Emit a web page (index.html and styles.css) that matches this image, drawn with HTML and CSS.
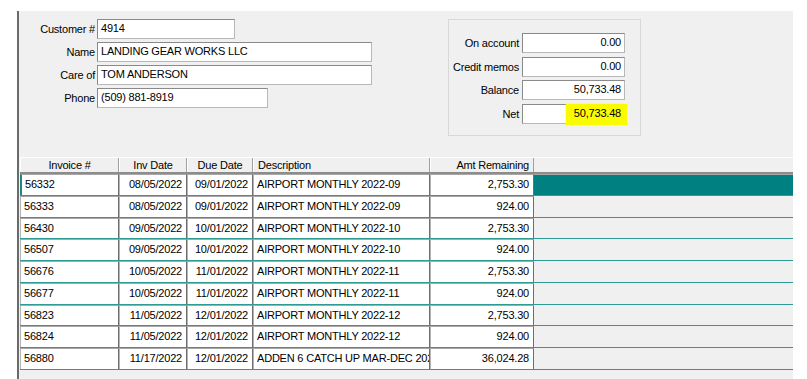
FILE: index.html
```html
<!DOCTYPE html>
<html lang="en">
<head>
    <meta charset="UTF-8">
    <meta name="viewport" content="width=device-width, initial-scale=1.0">
    <title>Customer Invoices</title>
    <link rel="stylesheet" href="styles.css">
</head>
<body>
    <div class="window">
        <div class="top">
            <!-- Customer fields -->
            <div class="customer">
                <div class="field">
                    <label>Customer #</label>
                    <div class="edit w-num">4914</div>
                </div>
                <div class="field">
                    <label>Name</label>
                    <div class="edit w-name">LANDING GEAR WORKS LLC</div>
                </div>
                <div class="field">
                    <label>Care of</label>
                    <div class="edit w-name">TOM ANDERSON</div>
                </div>
                <div class="field">
                    <label>Phone</label>
                    <div class="edit w-phone">(509) 881-8919</div>
                </div>
            </div>

            <!-- Totals -->
            <div class="totals">
                <label>On account</label>
                <div class="edit num">0.00</div>
                <label>Credit memos</label>
                <div class="edit num">0.00</div>
                <label>Balance</label>
                <div class="edit num">50,733.48</div>
                <label>Net</label>
                <div class="edit num"><span class="marker">50,733.48</span></div>
            </div>
        </div>

        <!-- Invoice grid -->
        <div class="grid">
            <div class="head">
                <div class="hcell center">Invoice #</div>
                <div class="hcell center">Inv Date</div>
                <div class="hcell center">Due Date</div>
                <div class="hcell">Description</div>
                <div class="hcell right">Amt Remaining</div>
                <div class="hfill"></div>
            </div>

            <div class="row selected">
                <div class="cell">56332</div><div class="cell right">08/05/2022</div><div class="cell right">09/01/2022</div><div class="cell">AIRPORT MONTHLY 2022-09</div><div class="cell right">2,753.30</div><div class="fill"></div>
            </div>
            <div class="row">
                <div class="cell">56333</div><div class="cell right">08/05/2022</div><div class="cell right">09/01/2022</div><div class="cell">AIRPORT MONTHLY 2022-09</div><div class="cell right">924.00</div><div class="fill"></div>
            </div>
            <div class="row">
                <div class="cell">56430</div><div class="cell right">09/05/2022</div><div class="cell right">10/01/2022</div><div class="cell">AIRPORT MONTHLY 2022-10</div><div class="cell right">2,753.30</div><div class="fill"></div>
            </div>
            <div class="row">
                <div class="cell">56507</div><div class="cell right">09/05/2022</div><div class="cell right">10/01/2022</div><div class="cell">AIRPORT MONTHLY 2022-10</div><div class="cell right">924.00</div><div class="fill"></div>
            </div>
            <div class="row">
                <div class="cell">56676</div><div class="cell right">10/05/2022</div><div class="cell right">11/01/2022</div><div class="cell">AIRPORT MONTHLY 2022-11</div><div class="cell right">2,753.30</div><div class="fill"></div>
            </div>
            <div class="row">
                <div class="cell">56677</div><div class="cell right">10/05/2022</div><div class="cell right">11/01/2022</div><div class="cell">AIRPORT MONTHLY 2022-11</div><div class="cell right">924.00</div><div class="fill"></div>
            </div>
            <div class="row">
                <div class="cell">56823</div><div class="cell right">11/05/2022</div><div class="cell right">12/01/2022</div><div class="cell">AIRPORT MONTHLY 2022-12</div><div class="cell right">2,753.30</div><div class="fill"></div>
            </div>
            <div class="row">
                <div class="cell">56824</div><div class="cell right">11/05/2022</div><div class="cell right">12/01/2022</div><div class="cell">AIRPORT MONTHLY 2022-12</div><div class="cell right">924.00</div><div class="fill"></div>
            </div>
            <div class="row">
                <div class="cell">56880</div><div class="cell right">11/17/2022</div><div class="cell right">12/01/2022</div><div class="cell">ADDEN 6 CATCH UP MAR-DEC 2022</div><div class="cell right">36,024.28</div><div class="fill"></div>
            </div>
        </div>
    </div>
</body>
</html>
```

FILE: styles.css
```css
/* Basic Reset */
* { box-sizing: border-box; margin: 0; padding: 0; }

body {
    background: #fff;
    font-family: "Liberation Sans", Arial, sans-serif;
    font-size: 11px;
    letter-spacing: -0.2px;
    color: #000;
    overflow: hidden;
}

/* Window frame */
.window {
    margin: 11px 14px 0 17px;
    height: 380px;
    background: #f0f0f0;
    border-left: 2px solid #6b6b6b;
}

.top {
    display: flex;
    height: 146px;
}

/* Edit boxes */
.edit {
    height: 20px;
    line-height: 17px;
    padding: 0 3px;
    background: #fff;
    border: 1px solid #8a8a8a;
    border-right-color: #b8b8b8;
    border-bottom-color: #b8b8b8;
    white-space: nowrap;
}

.w-num { width: 138px; }
.w-name { width: 275px; }
.w-phone { width: 171px; }

/* Customer fields */
.customer {
    width: 429px;
    padding-top: 8px;
    display: flex;
    flex-direction: column;
    gap: 3px;
}

.field {
    display: flex;
    align-items: center;
}

.field label {
    width: 78px;
    padding-right: 2px;
    text-align: right;
}

/* Totals group */
.totals {
    margin-top: 8px;
    width: 193px;
    height: 117px;
    border: 1px solid #d8d8d8;
    padding-top: 13px;
    display: grid;
    grid-template-columns: 70px 103px;
    grid-auto-rows: 20px;
    column-gap: 3px;
    row-gap: 3.5px;
    align-items: center;
}

.totals label {
    text-align: right;
}

.num {
    text-align: right;
    padding-right: 3px;
}

.marker {
    display: inline-block;
    height: 21px;
    line-height: 19px;
    margin: -1px -6px 0 0;
    padding: 0 6px 0 8px;
    background: #fbfb00;
    box-shadow: 0 0 2px #f4f46a;
}

/* Invoice grid */
.grid {
    padding-left: 1px;
}

.head, .row {
    display: grid;
    grid-template-columns: 99px 68px 66px 177px 104px 1fr;
}

.head {
    height: 17px;
    border-top: 1px solid #fff;
    border-bottom: 2px solid #8c8c8c;
}

.hcell {
    padding: 0 4px;
    line-height: 14px;
    border-left: 1px solid #fff;
    border-right: 1px solid #a0a0a0;
    white-space: nowrap;
    overflow: hidden;
}

.center { text-align: center; }
.right { text-align: right; }

.row {
    height: 21.75px;
    border-bottom: 1px solid #2e9c95;
}

.cell {
    background: #fff;
    padding: 0 3px 0 3px;
    line-height: 19px;
    border-top: 1px solid #a8a8a8;
    border-left: 1px solid #b4b4b4;
    border-right: 1px solid #6e6e6e;
    white-space: nowrap;
    overflow: hidden;
}

.cell.right { padding-right: 4px; }

.selected .cell:first-child {
    border-left: 2px solid #1b8a83;
}

.selected .fill {
    background: #008080;
    border-top: 1px solid #a8a8a8;
}
```
